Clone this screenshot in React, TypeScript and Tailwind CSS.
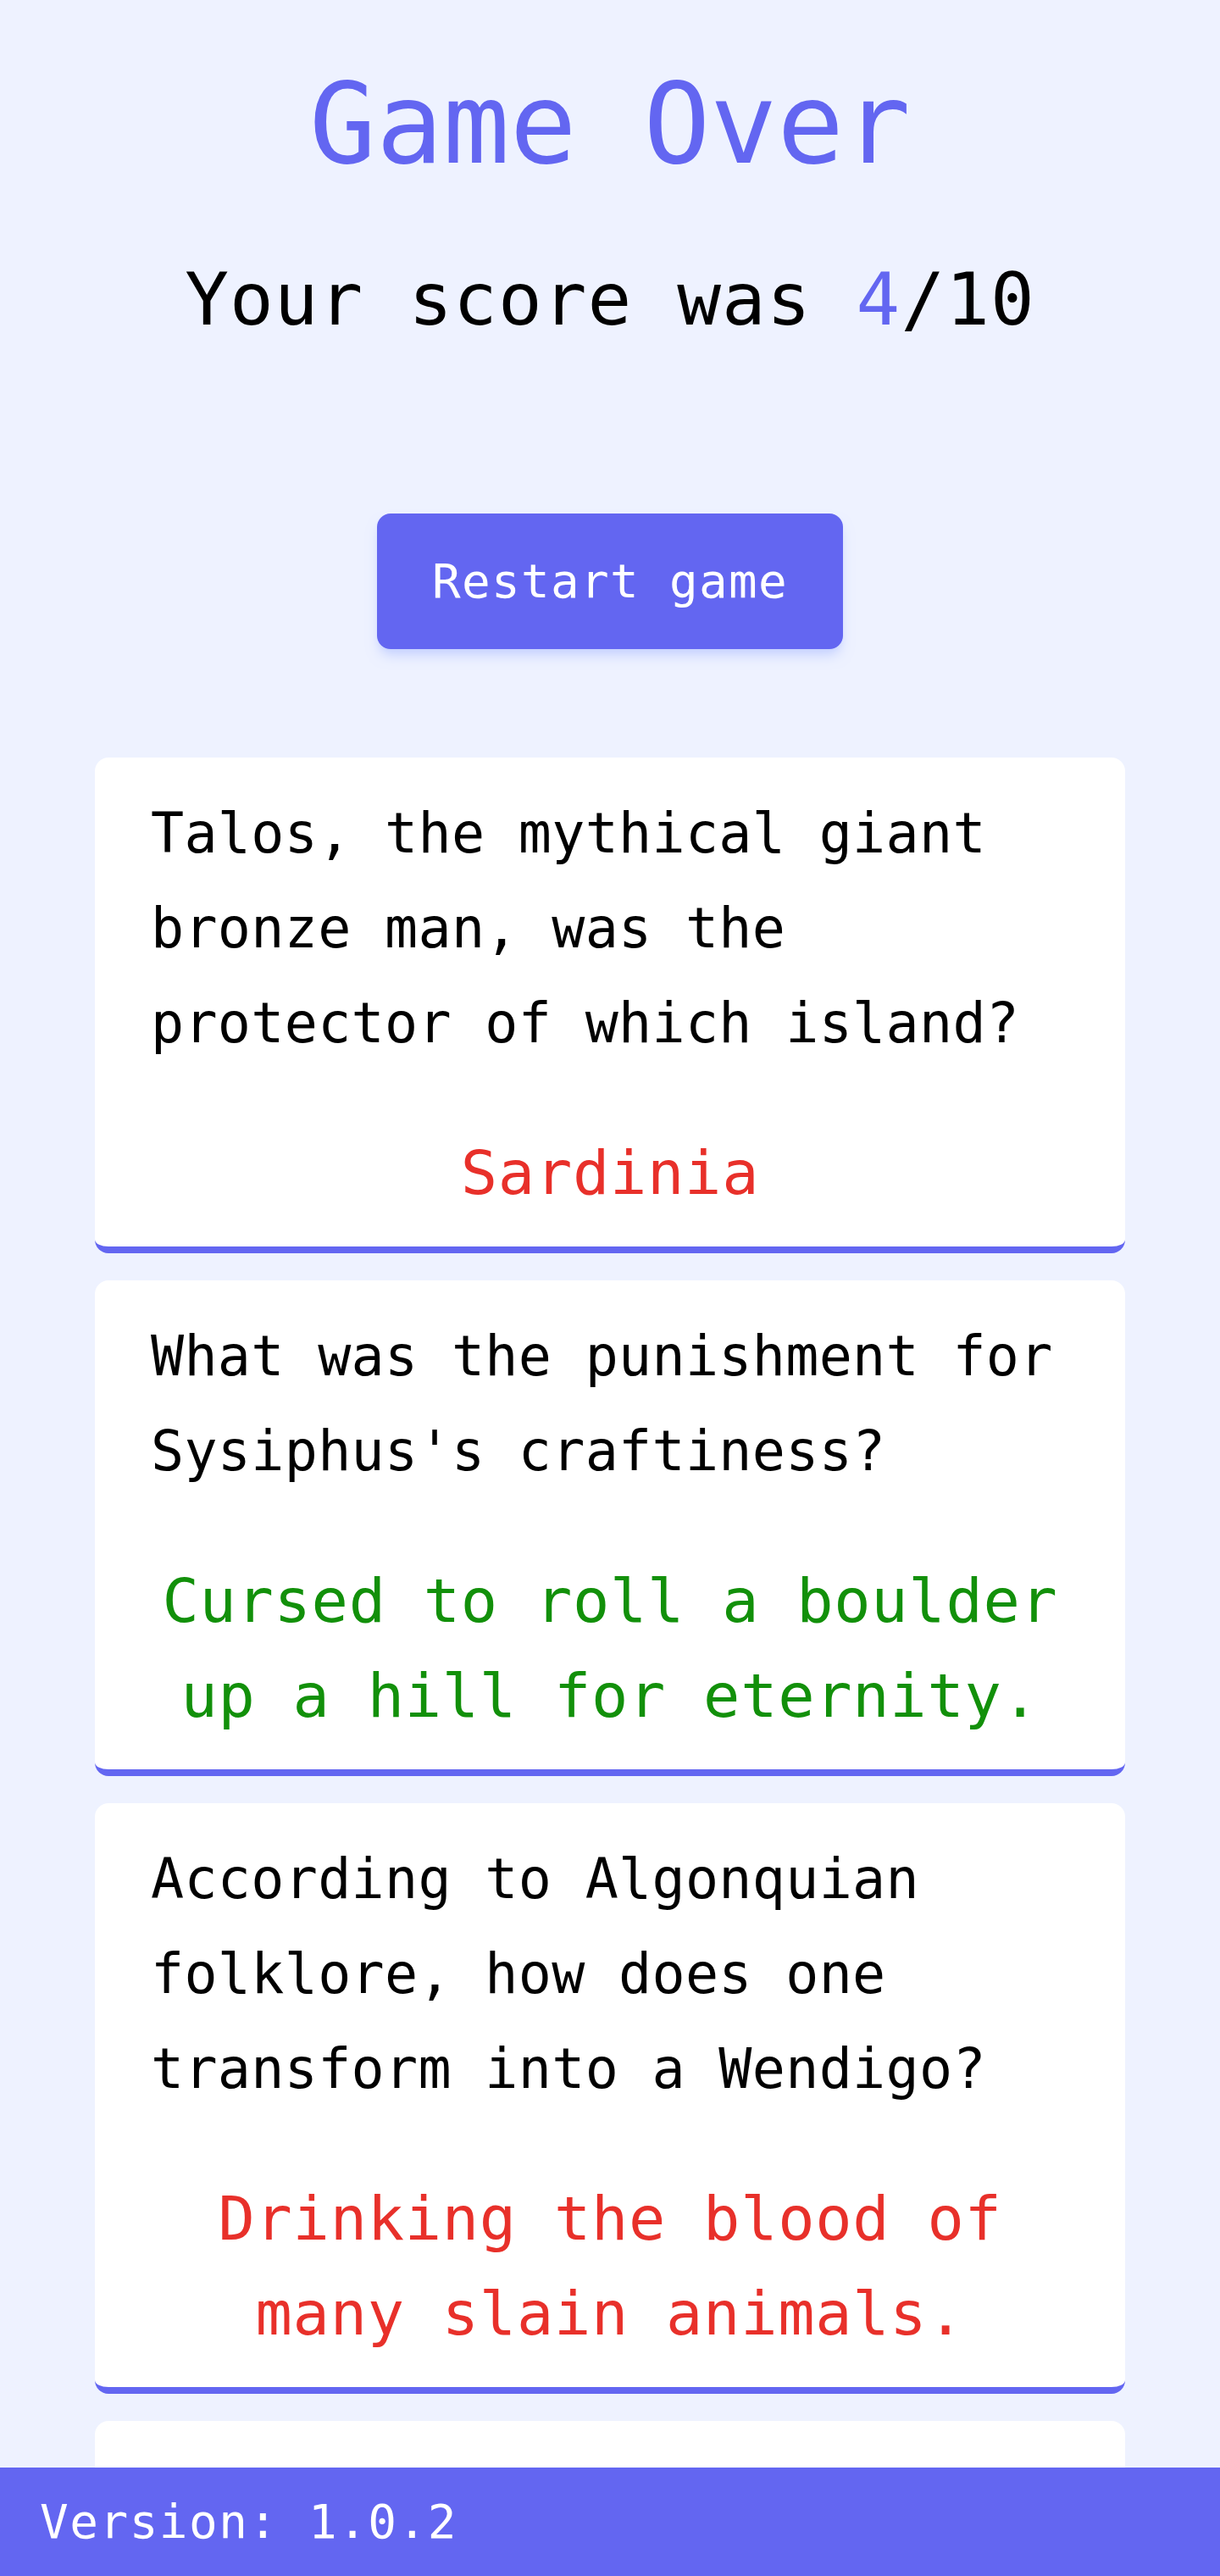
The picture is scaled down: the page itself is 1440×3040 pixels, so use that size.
import React from "react";

type Item = { q: string; a: string; correct: boolean };

const items: Item[] = [
  {
    q: "Talos, the mythical giant bronze man, was the protector of which island?",
    a: "Sardinia",
    correct: false,
  },
  {
    q: "What was the punishment for Sysiphus's craftiness?",
    a: "Cursed to roll a boulder up a hill for eternity.",
    correct: true,
  },
  {
    q: "According to Algonquian folklore, how does one transform into a Wendigo?",
    a: "Drinking the blood of many slain animals.",
    correct: false,
  },
  {
    q: "In Norse mythology, what is the name of the serpent which eats the roots of Yggdrasil?",
    a: "Nidhogg",
    correct: true,
  },
];

export default function App() {
  return (
    <div
      className="min-h-screen bg-[#eef2ff] text-black"
      style={{ fontFamily: '"DejaVu Sans Mono", monospace' }}
    >
      <div className="flex flex-col items-center pt-[81px] pb-[160px]">
        <h1 className="text-[131px] leading-none text-[#6366f1]">Game Over</h1>
        <p className="mt-[98px] text-[86px] leading-none tracking-[1.05px]">
          Your score was <span className="text-[#6366f1]">4</span>/10
        </p>
        <button className="mt-[210px] flex h-[160px] w-[550px] items-center justify-center rounded-2xl bg-[#6366f1] text-[56px] leading-none tracking-[1.3px] text-white shadow-lg shadow-indigo-200">
          Restart game
        </button>
        <div className="mt-[128px] flex w-[1216px] flex-col gap-8">
          {items.map((it, i) => (
            <div
              key={i}
              className="rounded-2xl border-b-8 border-[#6366f1] bg-white px-[66px] pt-[34px] pb-[31px]"
            >
              <p className="text-[65px] leading-[112px] tracking-[0.3px]">{it.q}</p>
              <p
                className={
                  "mt-[64px] text-center text-[72px] leading-[112px] tracking-[0.7px] " +
                  (it.correct ? "text-[#12900a]" : "text-[#e8302a]")
                }
              >
                {it.a}
              </p>
            </div>
          ))}
        </div>
      </div>
      <footer className="fixed bottom-0 left-0 flex h-[128px] w-full items-center bg-[#6366f1] px-[47px] text-[56px] leading-none tracking-[1.5px] text-white">
        Version: 1.0.2
      </footer>
    </div>
  );
}
